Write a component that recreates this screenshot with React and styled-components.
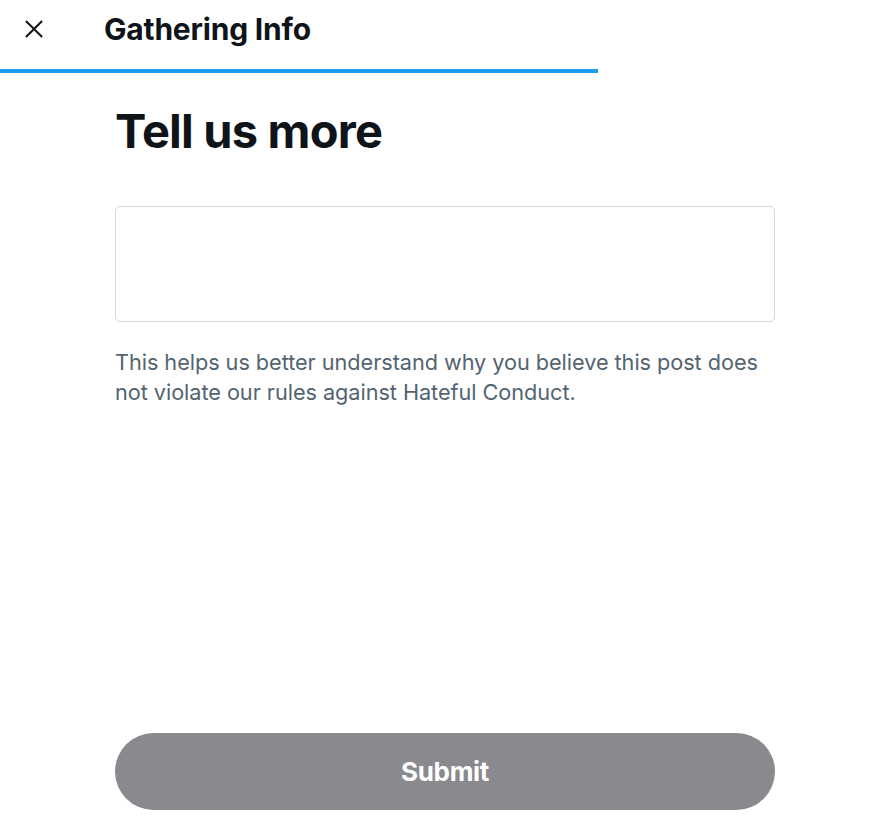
import React from 'react';
import styled, { createGlobalStyle } from 'styled-components';

const GlobalStyle = createGlobalStyle`
  html, body {
    margin: 0;
    padding: 0;
    background: #ffffff;
  }
  body {
    font-family: "Noto Sans", "Liberation Sans", sans-serif;
    color: #0f1419;
  }
`;

const SPage = styled.div`
  height: 835px;
  display: flex;
  flex-direction: column;
  background: #ffffff;
`;

const SHeader = styled.header`
  height: 69px;
  box-sizing: border-box;
  padding: 0 0 11px 16px;
  display: flex;
  align-items: center;
`;

const SCloseButton = styled.button`
  width: 36px;
  height: 36px;
  border: none;
  background: transparent;
  padding: 0;
  display: flex;
  align-items: center;
  justify-content: center;
  color: #0f1419;
  cursor: pointer;
`;

const SHeaderTitle = styled.h2`
  margin: 0 0 0 52px;
  font-family: "Inter", "Noto Sans", sans-serif;
  font-weight: 700;
  font-size: 30px;
  letter-spacing: -0.2px;
  line-height: 36px;
  color: #0f1419;
`;

const SProgress = styled.div`
  height: 4px;
  width: 100%;
`;

const SProgressFill = styled.div`
  height: 100%;
  background: #1d9bf0;
`;

const SBody = styled.main`
  flex: 1;
  display: flex;
  flex-direction: column;
  width: 660px;
  margin-left: 115px;
  padding-bottom: 25px;
`;

const STitle = styled.h1`
  margin: 30px 0 0;
  font-family: "Inter", "Noto Sans", sans-serif;
  font-weight: 700;
  font-size: 47px;
  letter-spacing: -0.8px;
  line-height: 56px;
  color: #0f1419;
`;

const STextArea = styled.textarea`
  margin-top: 47px;
  box-sizing: border-box;
  width: 100%;
  height: 116px;
  border: 1px solid #cfd9de;
  border-radius: 5px;
  resize: none;
  outline: none;
  font-family: inherit;
  font-size: 20px;
  padding: 12px;
`;

const SHelp = styled.p`
  margin: 25px 0 0;
  font-family: "Inter", "Noto Sans", sans-serif;
  font-size: 21.7px;
  letter-spacing: -0.05px;
  line-height: 30px;
  color: #536471;
`;

const SSubmit = styled.button`
  margin-top: auto;
  width: 100%;
  height: 77px;
  border: none;
  border-radius: 39px;
  background: #898a8e;
  color: #ffffff;
  font-family: "Inter", "Noto Sans", sans-serif;
  font-weight: 700;
  font-size: 26px;
  letter-spacing: -0.3px;
  cursor: default;
`;

const CloseIcon = () => (
  <svg width="22" height="22" viewBox="0 0 24 24" fill="none">
    <path
      d="M4 4 L20 20 M20 4 L4 20"
      stroke="currentColor"
      strokeWidth="2.2"
      strokeLinecap="square"
    />
  </svg>
);

const App = () => (
  <SPage>
    <GlobalStyle />
    <SHeader>
      <SCloseButton aria-label="Close">
        <CloseIcon />
      </SCloseButton>
      <SHeaderTitle>Gathering Info</SHeaderTitle>
    </SHeader>
    <SProgress>
      <SProgressFill style={{ width: `${(598 / 888) * 100}%` }} />
    </SProgress>
    <SBody>
      <STitle>Tell us more</STitle>
      <STextArea />
      <SHelp>
        This helps us better understand why you believe this post does not
        violate our rules against Hateful Conduct.
      </SHelp>
      <SSubmit type="button">Submit</SSubmit>
    </SBody>
  </SPage>
);

export default App;
